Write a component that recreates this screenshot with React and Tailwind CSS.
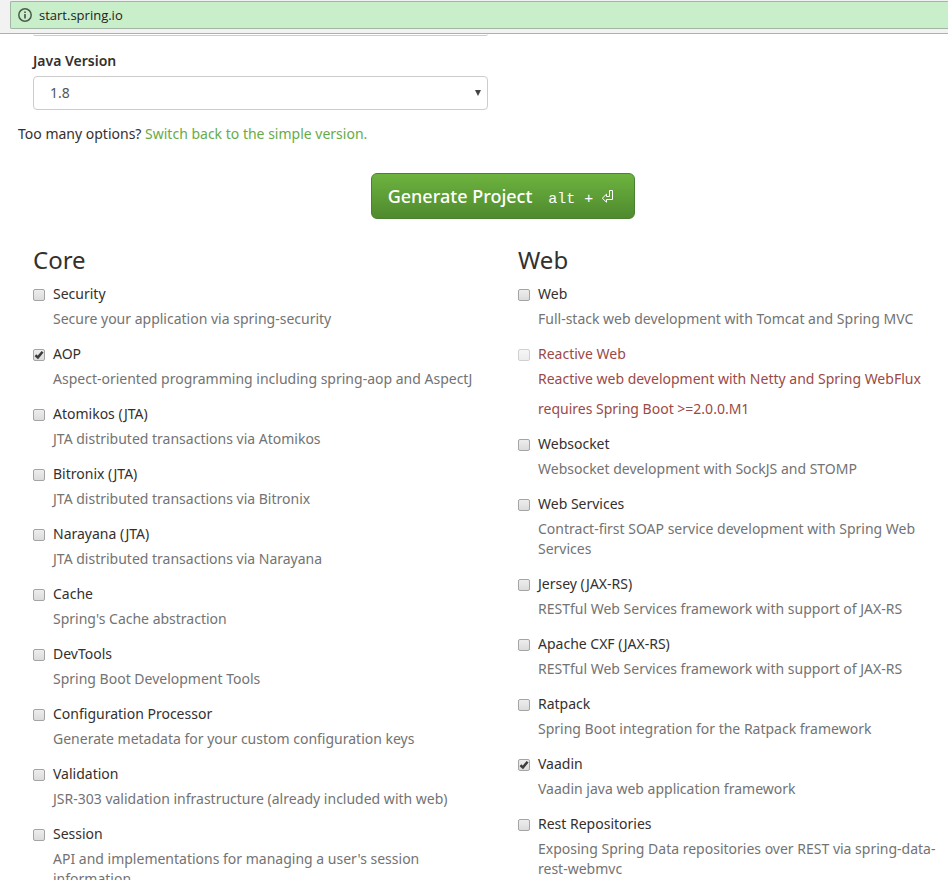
import { useState } from "react";

const core = [
  { name: "Security", text: "Secure your application via spring-security" },
  { name: "AOP", text: "Aspect-oriented programming including spring-aop and AspectJ", checked: true },
  { name: "Atomikos (JTA)", text: "JTA distributed transactions via Atomikos" },
  { name: "Bitronix (JTA)", text: "JTA distributed transactions via Bitronix" },
  { name: "Narayana (JTA)", text: "JTA distributed transactions via Narayana" },
  { name: "Cache", text: "Spring's Cache abstraction" },
  { name: "DevTools", text: "Spring Boot Development Tools" },
  { name: "Configuration Processor", text: "Generate metadata for your custom configuration keys" },
  { name: "Validation", text: "JSR-303 validation infrastructure (already included with web)" },
  { name: "Session", text: "API and implementations for managing a user's session information" },
];

const web = [
  { name: "Web", text: "Full-stack web development with Tomcat and Spring MVC" },
  {
    name: "Reactive Web",
    text: "Reactive web development with Netty and Spring WebFlux",
    requires: "requires Spring Boot >=2.0.0.M1",
  },
  { name: "Websocket", text: "Websocket development with SockJS and STOMP" },
  { name: "Web Services", text: "Contract-first SOAP service development with Spring Web Services" },
  { name: "Jersey (JAX-RS)", text: "RESTful Web Services framework with support of JAX-RS" },
  { name: "Apache CXF (JAX-RS)", text: "RESTful Web Services framework with support of JAX-RS" },
  { name: "Ratpack", text: "Spring Boot integration for the Ratpack framework" },
  { name: "Vaadin", text: "Vaadin java web application framework", checked: true },
  { name: "Rest Repositories", text: "Exposing Spring Data repositories over REST via spring-data-rest-webmvc" },
];

function Dependency({ name, text, requires, checked = false }) {
  const [on, setOn] = useState(checked);
  return (
    <li className={requires ? "mb-[15px] text-[#9a4a49]" : "mb-[15px] text-[#34302d]"}>
      <label className="grid grid-cols-[13px_1fr] gap-x-[7px]">
        <span className="relative mt-[5px] block size-[13px]">
          <input
            type="checkbox"
            checked={on}
            disabled={Boolean(requires)}
            onChange={(e) => setOn(e.target.checked)}
            className="block size-[12px] appearance-none rounded-[2px] border border-[#a4a4a4] bg-linear-to-b from-[#ededed] to-[#dcdcdc] disabled:border-[#d0d0d0] disabled:from-[#f6f6f6] disabled:to-[#ececec]"
          />
          {on && (
            <svg viewBox="0 0 12 12" className="pointer-events-none absolute top-0 left-0 size-[12px]" aria-hidden="true">
              <path d="M2.4 6.3 4.9 8.4 9.6 2.8" fill="none" stroke="#3c3c3c" strokeWidth="2.5" />
            </svg>
          )}
        </span>
        <span>{name}</span>
        <span className={requires ? "col-start-2 mt-[5px]" : "col-start-2 mt-[5px] text-[#737373]"}>{text}</span>
        {requires && <span className="col-start-2 mt-[10px]">{requires}</span>}
      </label>
    </li>
  );
}

function Group({ title, items }) {
  return (
    <section className="pl-[15px]">
      <h2 className="mb-[11px] text-[24px] leading-[26px] text-[#34302d]">{title}</h2>
      <ul>
        {items.map((item) => (
          <Dependency key={item.name} {...item} />
        ))}
      </ul>
    </section>
  );
}

export default function App() {
  return (
    <div className="flex h-screen flex-col overflow-hidden bg-white font-['Noto_Sans',sans-serif] text-[14px] leading-[20px] text-[#34302d]">
      <header className="shrink-0 border-b border-[#b0b0b0] bg-[#f2f2f2] pt-px pb-[4px] pl-[10px]">
        <div className="flex h-[28px] items-center gap-[7px] rounded-l-[2px] border border-r-0 border-[#a3b5a5] bg-[#c8eeca] pl-[7px]">
          <svg viewBox="0 0 14 14" className="size-[14px] shrink-0" fill="none" stroke="#4d5a4e" strokeWidth="1.5" aria-hidden="true">
            <circle cx="7" cy="7" r="6.2" />
            <path d="M7 6v4.4M7 3.4v1.6" strokeWidth="1.7" />
          </svg>
          <input
            aria-label="Address"
            defaultValue="start.spring.io"
            className="min-w-0 flex-1 bg-transparent font-['Open_Sans',sans-serif] text-[13px] text-[#222] outline-none"
          />
        </div>
      </header>

      <main className="min-h-0 flex-1 overflow-hidden pl-[18px]">
        <div className="grid grid-cols-[470px_1fr] gap-x-[15px]">
          <div className="pl-[15px]">
            <div className="h-[2px] rounded-b-[4px] border-b border-[#ccc]" />
            <label htmlFor="java" className="mt-[15px] mb-[5px] block font-semibold">
              Java Version
            </label>
            <div className="relative">
              <select
                id="java"
                className="block h-[34px] w-full appearance-none rounded-[4px] border border-[#ccc] bg-white px-[16px] text-[#555]"
              >
                <option>1.8</option>
              </select>
              <svg viewBox="0 0 6 6" className="pointer-events-none absolute top-[14px] right-[7px] size-[6px]" aria-hidden="true">
                <path d="M0 0h6L3 6z" fill="#444" />
              </svg>
            </div>
          </div>
        </div>

        <p className="mt-[14px]">
          Too many options?{" "}
          <a href="#simple" className="text-[#68ab45]">
            Switch back to the simple version.
          </a>
        </p>

        <div className="mt-[29px] flex min-w-[970px] justify-center">
          <button
            type="button"
            className="flex h-[46px] items-baseline gap-[16px] rounded-[6px] border border-[#4b8030] bg-linear-to-b from-[#6db33f] to-[#4f8a2e] pt-[10px] pr-[20px] pl-[16px] text-[18px] leading-[24px] font-medium text-white"
          >
            <span>Generate Project</span>
            <span className="flex items-baseline gap-[8px] font-['Liberation_Mono',monospace] text-[15px] font-normal">
              <span>alt +</span>
              <svg viewBox="0 0 13 13" className="size-[13px]" fill="none" stroke="white" aria-hidden="true">
                <path d="M8.5.5h3v9h-6v2.7L1.3 8.2 5.5 4.2v2.3h3z" />
              </svg>
            </span>
          </button>
        </div>

        <div className="mt-[28px] grid grid-cols-[470px_1fr] gap-x-[15px]">
          <Group title="Core" items={core} />
          <Group title="Web" items={web} />
        </div>
      </main>
    </div>
  );
}
